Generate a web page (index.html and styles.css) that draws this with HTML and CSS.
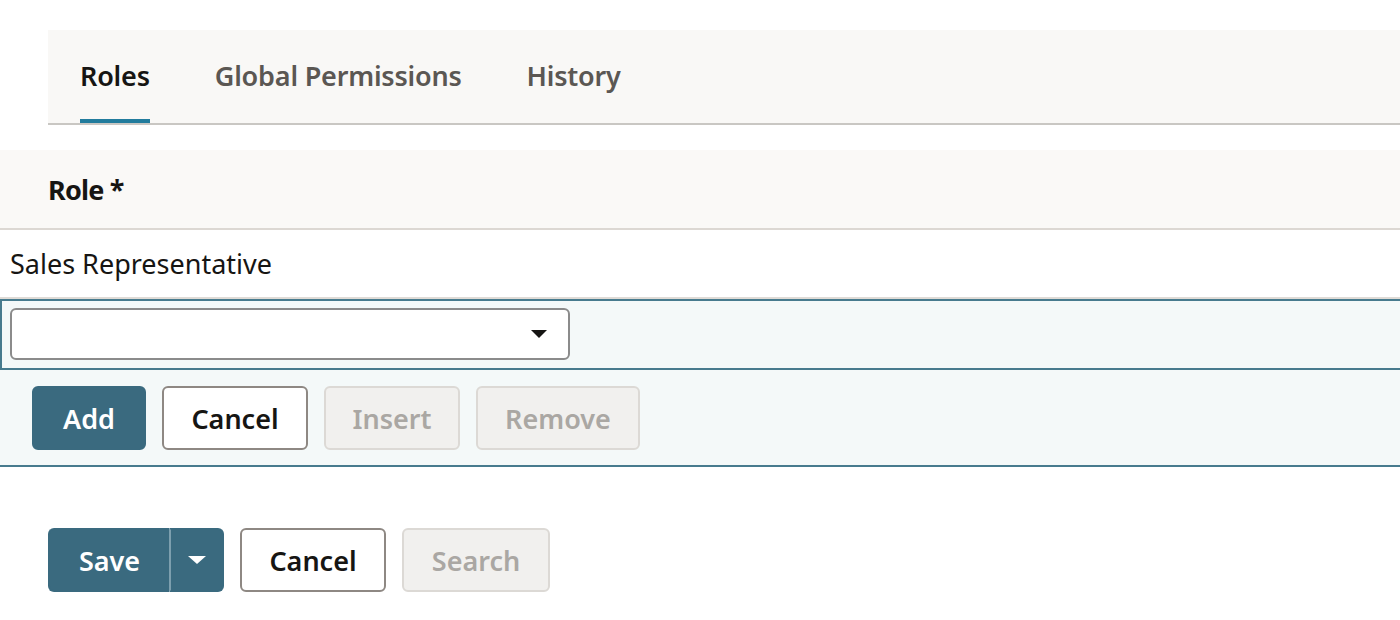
FILE: index.html
```html
<!DOCTYPE html>
<html lang="en">
<head>
<meta charset="utf-8">
<title>Roles</title>
<link rel="stylesheet" href="styles.css">
</head>
<body>
  <nav class="tabbar">
    <a class="tab tab-active">Roles</a>
    <a class="tab">Global Permissions</a>
    <a class="tab">History</a>
  </nav>

  <section class="grid">
    <div class="grid-head">Role *</div>
    <div class="grid-row">Sales Representative</div>
    <div class="grid-edit">
      <div class="select">
        <span class="select-value"></span>
        <svg class="select-arrow" width="16" height="8" viewBox="0 0 16 8"><path d="M0 0h16L8 8z" fill="#161513"/></svg>
      </div>
    </div>
    <div class="grid-actions">
      <button class="btn btn-primary btn-add">Add</button>
      <button class="btn btn-outline btn-cancel-row">Cancel</button>
      <button class="btn btn-disabled btn-insert">Insert</button>
      <button class="btn btn-disabled btn-remove">Remove</button>
    </div>
  </section>

  <footer class="form-actions">
    <div class="split">
      <button class="btn btn-primary split-main">Save</button>
      <button class="btn btn-primary split-menu">
        <svg width="18" height="8" viewBox="0 0 18 8"><path d="M0 0h18L9 8z" fill="#ffffff"/></svg>
      </button>
    </div>
    <button class="btn btn-outline btn-cancel">Cancel</button>
    <button class="btn btn-disabled btn-search">Search</button>
  </footer>
</body>
</html>
```

FILE: styles.css
```css
* {
  box-sizing: border-box;
}

body {
  margin: 0;
  background: #ffffff;
  font-family: "Noto Sans", "Liberation Sans", sans-serif;
  color: #161513;
  font-size: 27px;
}

/* Tab strip */
.tabbar {
  margin: 30px 0 0 48px;
  height: 95px;
  display: flex;
  gap: 65px;
  padding-left: 32px;
  background: #f9f8f6;
  border-bottom: 2px solid #c9c7c3;
}

.tab {
  display: flex;
  align-items: center;
  font-weight: 600;
  color: #5b5753;
  border-bottom: 4px solid transparent;
  padding-top: 2px;
  letter-spacing: -0.2px;
}

.tab-active {
  color: #161513;
  border-bottom-color: #227c9d;
}

/* Table */
.grid {
  margin-top: 25px;
}

.grid-head {
  height: 80px;
  display: flex;
  align-items: center;
  padding-left: 48px;
  background: #faf9f7;
  border-bottom: 2px solid #dcd8d3;
  font-weight: 700;
  letter-spacing: -0.8px;
}

.grid-row {
  height: 69px;
  display: flex;
  align-items: center;
  padding-left: 10px;
  border-bottom: 2px solid #dfdbd6;
}

.grid-edit {
  height: 71px;
  padding: 7px 8px 0;
  background: #f4f9f9;
  border: 2px solid #477b8e;
  border-right: 0;
}

.select {
  width: 560px;
  height: 52px;
  display: flex;
  align-items: center;
  justify-content: flex-end;
  padding-right: 21px;
  background: #ffffff;
  border: 2px solid #8b8b8b;
  border-radius: 6px;
}

.select-arrow {
  display: block;
}

.grid-actions {
  height: 97px;
  display: flex;
  align-items: flex-start;
  gap: 16px;
  padding: 16px 0 0 32px;
  background: #f4f9f9;
  border-bottom: 2px solid #477b8e;
}

/* Buttons */
.btn {
  height: 64px;
  display: flex;
  align-items: center;
  justify-content: center;
  font-family: inherit;
  font-size: 27px;
  font-weight: 600;
  border-radius: 6px;
  border: 2px solid transparent;
  padding: 0;
  cursor: pointer;
}

.btn-primary {
  background: #3a6a7f;
  color: #ffffff;
  border-color: #3a6a7f;
}

.btn-outline {
  background: #ffffff;
  color: #161513;
  border-color: #8e8883;
}

.btn-disabled {
  background: #f1f0ee;
  color: #aaa7a3;
  border-color: #dcd9d5;
  cursor: default;
}

.btn-add { width: 114px; }
.btn-cancel-row { width: 146px; }
.btn-insert { width: 136px; }
.btn-remove { width: 164px; }

/* Form footer */
.form-actions {
  display: flex;
  gap: 16px;
  margin: 61px 0 0 48px;
}

.split {
  display: flex;
}

.split-main {
  width: 121px;
  border-radius: 6px 0 0 6px;
  border-right: 0;
}

.split-menu {
  width: 55px;
  border-radius: 0 6px 6px 0;
  border-left: 2px solid #7d9fae;
}

.split-menu svg {
  display: block;
}

.btn-cancel { width: 146px; }
.btn-search { width: 148px; }
```
